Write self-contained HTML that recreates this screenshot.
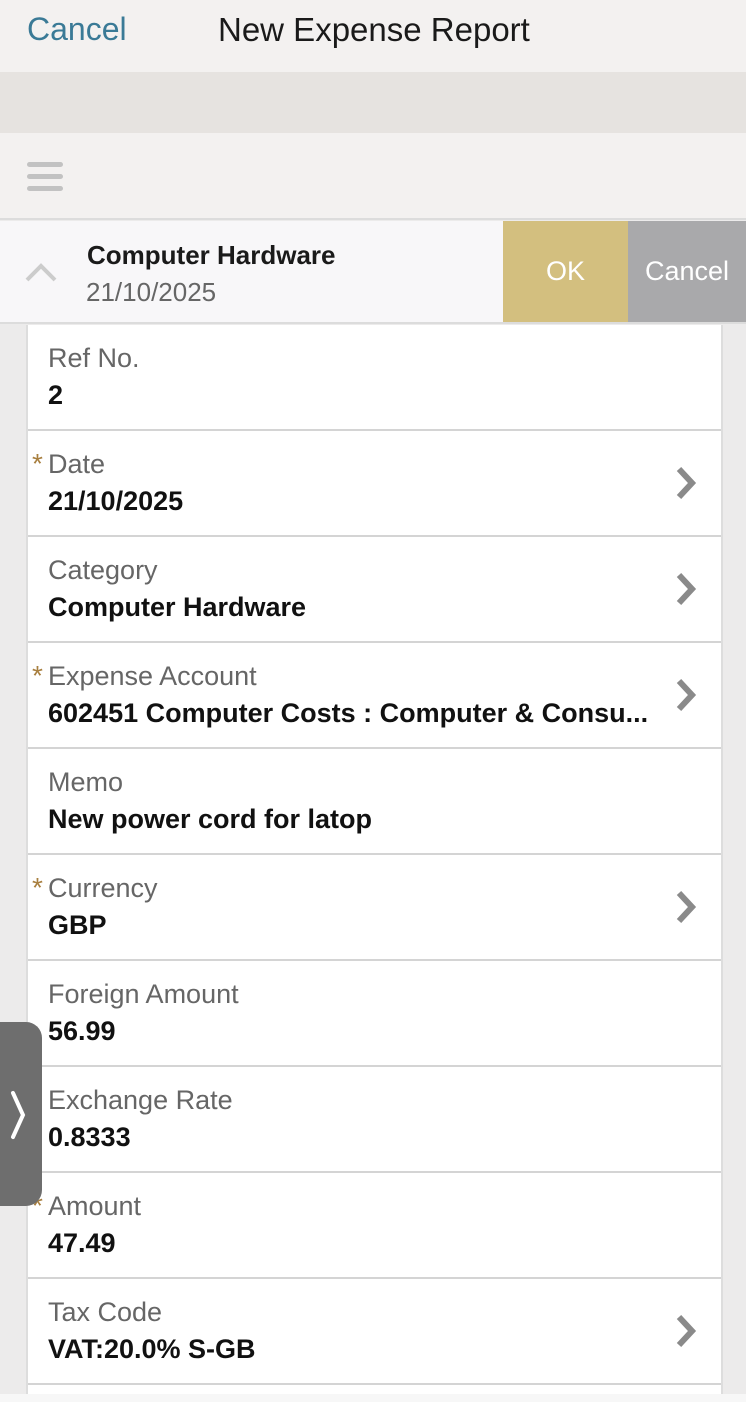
<!DOCTYPE html>
<html><head><meta charset="utf-8"><style>
*{margin:0;padding:0;box-sizing:border-box}
body{width:746px;height:1402px;overflow:hidden;background:#ecebeb;font-family:"Liberation Sans",sans-serif;position:relative}
.top{position:absolute;left:0;top:0;width:746px;height:72px;background:#f3f1f0}
.top .c{position:absolute;left:27px;top:11px;font-size:32px;color:#3a7a96}
.top .t{position:absolute;left:218px;top:11px;font-size:33px;color:#1a1a1a}
.band{position:absolute;left:0;top:72px;width:746px;height:61px;background:#e6e3e0}
.bar{position:absolute;left:0;top:133px;width:746px;height:87px;background:#f3f1f0;border-bottom:2px solid #dcdcdc}
.ham{position:absolute;left:27px;width:36px;height:5px;border-radius:3px;background:#c2c2c2}
.ih{position:absolute;left:0;top:221px;width:746px;height:103px;background:#f8f7f9;border-bottom:2px solid #dcdcdc}
.ih .n{position:absolute;left:87px;top:19px;font-size:26px;font-weight:bold;color:#1a1a1a}
.ih .d{position:absolute;left:86px;top:56px;font-size:26px;color:#666}
.ok{position:absolute;left:503px;top:0;width:125px;height:101px;background:#d3bf7f;color:#fff;font-size:27px;text-align:center;line-height:101px}
.cn{position:absolute;left:628px;top:0;width:118px;height:101px;background:#a9a9ab;color:#fff;font-size:27px;text-align:center;line-height:101px}
.card{position:absolute;left:26px;top:325px;width:697px;height:1069px;background:#fff;border-left:2px solid #ddd;border-right:2px solid #ddd}
.row{position:absolute;left:0;width:693px;height:106px;border-bottom:2px solid #d4d4d4}
.row .l{position:absolute;left:20px;top:18px;font-size:27px;color:#666}
.row .v{position:absolute;left:20px;top:55px;font-size:27px;font-weight:bold;color:#111}
.row .s{position:absolute;left:4px;top:17px;font-size:28px;color:#a87f3f}
.row svg{position:absolute;left:645px;top:34px}
.tab{position:absolute;left:0;top:1022px;width:42px;height:184px;background:#6e6e6e;border-radius:0 16px 16px 0}
.foot{position:absolute;left:0;top:1394px;width:746px;height:8px;background:#f7f7f7}
</style></head><body>
<div class="top"><div class="c">Cancel</div><div class="t">New Expense Report</div></div>
<div class="band"></div>
<div class="bar"><div class="ham" style="top:29px"></div><div class="ham" style="top:41px"></div><div class="ham" style="top:53px"></div></div>
<div class="ih">
<svg style="position:absolute;left:24px;top:40px" width="34" height="22"><path d="M3 19 L17 5 L31 19" fill="none" stroke="#ccc" stroke-width="4"/></svg>
<div class="n">Computer Hardware</div><div class="d">21/10/2025</div>
<div class="ok">OK</div><div class="cn">Cancel</div></div>
<div class="card">
<div class="row" style="top:0"><div class="l">Ref No.</div><div class="v">2</div></div>
<div class="row" style="top:106px"><div class="s">*</div><div class="l">Date</div><div class="v">21/10/2025</div><svg width="26" height="36"><path d="M6 4 L19 18 L6 32" fill="none" stroke="#8a8a8a" stroke-width="6"/></svg></div>
<div class="row" style="top:212px"><div class="l">Category</div><div class="v">Computer Hardware</div><svg width="26" height="36"><path d="M6 4 L19 18 L6 32" fill="none" stroke="#8a8a8a" stroke-width="6"/></svg></div>
<div class="row" style="top:318px"><div class="s">*</div><div class="l">Expense Account</div><div class="v">602451 Computer Costs : Computer &amp; Consu...</div><svg width="26" height="36"><path d="M6 4 L19 18 L6 32" fill="none" stroke="#8a8a8a" stroke-width="6"/></svg></div>
<div class="row" style="top:424px"><div class="l">Memo</div><div class="v">New power cord for latop</div></div>
<div class="row" style="top:530px"><div class="s">*</div><div class="l">Currency</div><div class="v">GBP</div><svg width="26" height="36"><path d="M6 4 L19 18 L6 32" fill="none" stroke="#8a8a8a" stroke-width="6"/></svg></div>
<div class="row" style="top:636px"><div class="l">Foreign Amount</div><div class="v">56.99</div></div>
<div class="row" style="top:742px"><div class="l">Exchange Rate</div><div class="v">0.8333</div></div>
<div class="row" style="top:848px"><div class="s">*</div><div class="l">Amount</div><div class="v">47.49</div></div>
<div class="row" style="top:954px"><div class="l">Tax Code</div><div class="v">VAT:20.0% S-GB</div><svg width="26" height="36"><path d="M6 4 L19 18 L6 32" fill="none" stroke="#8a8a8a" stroke-width="6"/></svg></div>
</div>
<div class="tab"><svg style="position:absolute;left:8px;top:68px" width="20" height="50"><path d="M5 3 L15 25 L5 47" fill="none" stroke="#fff" stroke-width="4" stroke-linecap="round"/></svg></div>
<div class="foot"></div>
</body></html>
